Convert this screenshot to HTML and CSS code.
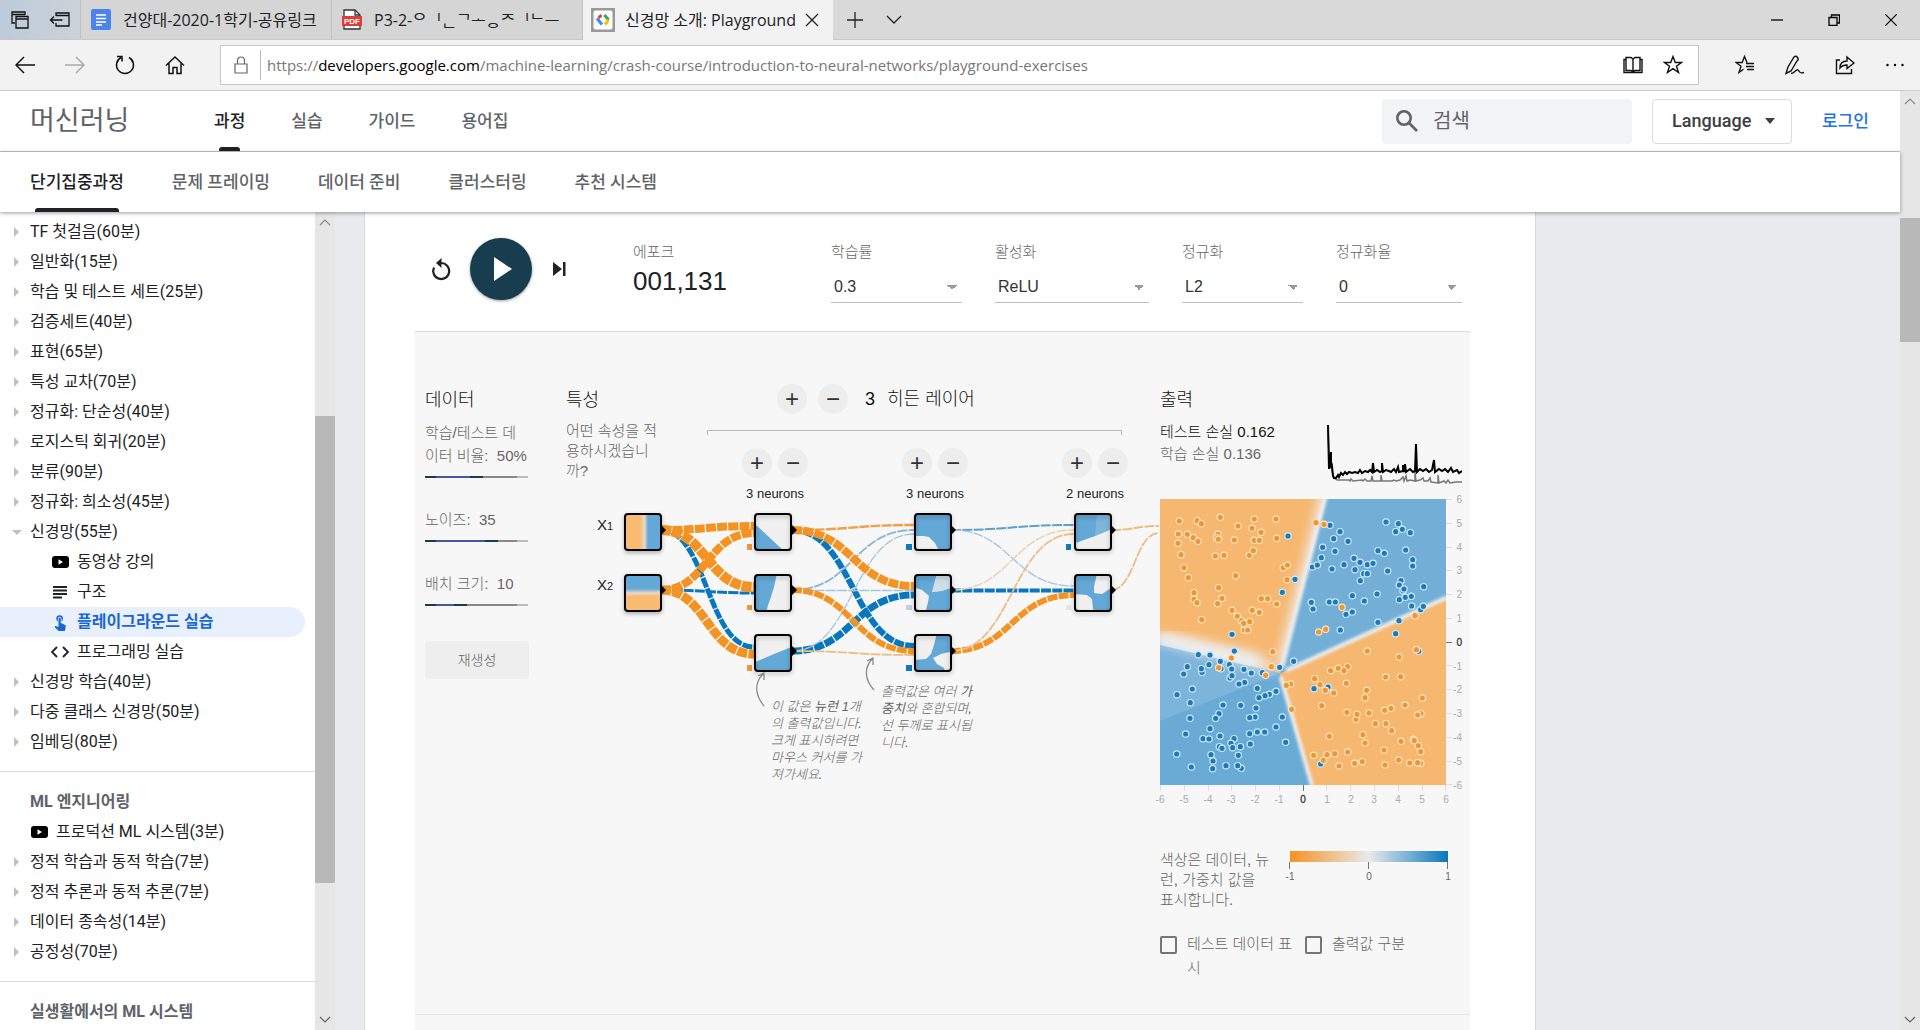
FILE: index.html
```html
<!DOCTYPE html>
<html lang="ko">
<head>
<meta charset="utf-8">
<title>신경망 소개: Playground 실습</title>
<link rel="stylesheet" href="styles.css">
</head>
<body>
<div class="tabbar">
  <div class="tab-tools">
    <button class="icon-btn" aria-label="탭 모음"><svg width="20" height="20" viewBox="0 0 20 20" fill="none" stroke="#111" stroke-width="1.3"><path d="M15 5V2H2v11h3M2 4.500h13"/><path d="M6 6.500h12v11.500H6zM6 9h12" /></svg></button>
    <button class="icon-btn" aria-label="탭 보관"><svg width="22" height="18" viewBox="0 0 22 18" fill="none" stroke="#111" stroke-width="1.300"><path d="M7 5V2h13v13H7v-3M7 4.500h13M1.500 9h12M5 5.500L1.500 9 5 12.500"/></svg></button>
  </div>
  <div class="tab">
    <svg width="20" height="21" viewBox="0 0 20 21"><rect width="20" height="21" rx="2" fill="#4c84ee"/><path d="M5 6h10M5 9.500h10M5 13h10M5 16h6" stroke="#fff" stroke-width="1.600"/></svg>
    <span class="tab-title">건양대-2020-1학기-공유링크</span>
  </div>
  <div class="tab">
    <svg width="20" height="21" viewBox="0 0 20 21"><path d="M2 1h11l5 5v14H2z" fill="#fff" stroke="#333" stroke-width="1.300"/><path d="M13 1v5h5" fill="none" stroke="#333" stroke-width="1.300"/><rect y="7" width="20" height="10" fill="#e13b38"/><text x="10" y="15" text-anchor="middle" class="pdf-label">PDF</text></svg>
    <span class="tab-title">P3-2-ᄋ&#8204;ᅵ&#8204;ᆫ&#8204;ᄀ&#8204;ᅩ&#8204;ᆼ&#8204;ᄌ&#8204;ᅵ&#8204;ᄂ&#8204;ᅳ</span>
  </div>
  <div class="tab tab-active">
    <svg width="24" height="24" viewBox="0 0 24 24"><rect width="24" height="24" fill="#999"/><rect x="2.500" y="2.500" width="19" height="19" rx="2" fill="#fff"/><g fill="none" stroke-width="3"><path d="M10.500 7L7.500 10" stroke="#ea4335"/><path d="M6 10.500l5 6" stroke="#4285f4"/><path d="M13.500 7l4 5" stroke="#34a853"/><path d="M17.500 12L14 16.500" stroke="#fbbc05"/></g></svg>
    <span class="tab-title">신경망 소개: Playground</span>
    <button class="icon-btn" aria-label="탭 닫기"><svg width="14" height="14" viewBox="0 0 14 14" stroke="#222" stroke-width="1.300"><path d="M1 1l12 12M13 1L1 13"/></svg></button>
  </div>
  <div class="tab-extra">
    <button class="icon-btn" aria-label="새 탭"><svg width="18" height="18" viewBox="0 0 18 18" stroke="#222" stroke-width="1.300"><path d="M9 1v16M1 9h16"/></svg></button>
    <button class="icon-btn" aria-label="탭 목록"><svg width="16" height="10" viewBox="0 0 16 10" fill="none" stroke="#222" stroke-width="1.300"><path d="M1 1l7 7 7-7"/></svg></button>
  </div>
  <div class="window-controls">
    <button class="icon-btn" aria-label="최소화"><svg width="12" height="12" viewBox="0 0 12 12" stroke="#000" stroke-width="1.300"><path d="M0 6h12"/></svg></button>
    <button class="icon-btn" aria-label="이전 크기로"><svg width="12" height="12" viewBox="0 0 12 12" fill="none" stroke="#000" stroke-width="1.300"><path d="M1 3.500h8v8H1zM3.500 3.500V1h8v8H9"/></svg></button>
    <button class="icon-btn" aria-label="닫기"><svg width="12" height="12" viewBox="0 0 12 12" stroke="#000" stroke-width="1.200"><path d="M0 0l12 12M12 0L0 12"/></svg></button>
  </div>
</div>

<div class="toolbar">
  <div class="nav-buttons">
    <button class="icon-btn" aria-label="뒤로"><svg width="20" height="18" viewBox="0 0 20 18" fill="none" stroke="#111" stroke-width="1.500"><path d="M20 9H1M9 1L1 9l8 8"/></svg></button>
    <button class="icon-btn" aria-label="앞으로"><svg width="20" height="18" viewBox="0 0 20 18" fill="none" stroke="#aaa" stroke-width="1.500"><path d="M0 9h19M11 1l8 8-8 8"/></svg></button>
    <button class="icon-btn" aria-label="새로 고침"><svg width="20" height="20" viewBox="0 0 20 20" fill="none" stroke="#111" stroke-width="1.500"><path d="M14 2.500A8.500 8.500 0 1 1 6 2.500M2 1.500h5v5"/></svg></button>
    <button class="icon-btn" aria-label="홈"><svg width="20" height="20" viewBox="0 0 20 20" fill="none" stroke="#111" stroke-width="1.500"><path d="M1 10.500L10 2l9 8.500M4 8.500V18.500h4v-6h4v6h4V8.500"/></svg></button>
  </div>
  <div class="address">
    <svg class="lock" width="14" height="18" viewBox="0 0 14 18" fill="none" stroke="#666" stroke-width="1.200"><path d="M1 8h12v9H1zM3.500 8V4.500a3.500 3.500 0 0 1 7 0V8"/></svg>
    <span class="url">https://<b>developers.google.com</b>/machine-learning/crash-course/introduction-to-neural-networks/playground-exercises</span>
    <button class="icon-btn" aria-label="읽기용 보기"><svg width="20" height="18" viewBox="0 0 20 18" fill="none" stroke="#111" stroke-width="1.400"><path d="M10 3v13M3 1.500h5l2 1.500 2-1.500h5v13h-5L10 16l-2-1.500H3zM3 3.500H1v13h18v-13h-2"/></svg></button>
    <button class="icon-btn" aria-label="즐겨찾기 추가"><svg width="20" height="20" viewBox="0 0 20 20" fill="none" stroke="#111" stroke-width="1.400"><path d="M10 1.500l2.300 6h6.200l-5 3.800 2 6.200-5.500-3.800-5.500 3.800 2-6.200-5-3.800h6.200z"/></svg></button>
  </div>
  <div class="tool-buttons">
    <button class="icon-btn" aria-label="허브"><svg width="20" height="20" viewBox="0 0 20 20" fill="none" stroke="#111" stroke-width="1.400"><path d="M12 7.500L9.500 1.500l-2.300 6H1l5 3.800-2 6.200 4.500-3.200M11 8.500h8M11 11.500h8M12 14.500h7"/></svg></button>
    <button class="icon-btn" aria-label="메모 추가"><svg width="20" height="20" viewBox="0 0 20 20" fill="none" stroke="#111" stroke-width="1.400"><path d="M1 18.500l2-6.500L9 2q2-1.500 3.500.5T12 6l-6 10zM6 18.500c4 0 5-5 7-3.500s1 4 6 2.500"/></svg></button>
    <button class="icon-btn" aria-label="공유"><svg width="20" height="20" viewBox="0 0 20 20" fill="none" stroke="#111" stroke-width="1.400"><path d="M5 5H1.500v13.500h15V14M5 13c0-5 3-7 7-7V2l7 6-7 5.500V10c-3 0-5 .5-7 3z"/></svg></button>
    <button class="icon-btn" aria-label="설정 등"><svg width="20" height="4" viewBox="0 0 20 4"><circle cx="2.500" cy="2" r="1.200"/><circle cx="10" cy="2" r="1.200"/><circle cx="17.500" cy="2" r="1.200"/></svg></button>
  </div>
</div>

<div class="viewport">
  <div class="site">
    <header class="site-header">
      <a class="product" href="#">머신러닝</a>
      <nav class="tabs-nav top-tabs">
        <a class="current" href="#">과정</a><a href="#">실습</a><a href="#">가이드</a><a href="#">용어집</a>
      </nav>
      <label class="search">
        <svg width="24" height="24" viewBox="0 0 24 24" fill="none" stroke="#5f6368" stroke-width="2.600"><circle cx="9" cy="9" r="6.700"/><path d="M14 14l8 8"/></svg>
        <input type="search" placeholder="검색" aria-label="검색">
      </label>
      <button class="language">Language <svg width="10" height="6" viewBox="0 0 10 6"><path d="M0 0h10L5 6z" fill="#3c4043"/></svg></button>
      <a class="login" href="#">로그인</a>
    </header>
    <nav class="tabs-nav sub-tabs">
      <a class="current" href="#">단기집중과정</a><a href="#">문제 프레이밍</a><a href="#">데이터 준비</a><a href="#">클러스터링</a><a href="#">추천 시스템</a>
    </nav>

    <div class="content">
      <nav class="sidebar">
        <ul>
          <li><a class="fold" href="#">TF 첫걸음(60분)</a></li>
          <li><a class="fold" href="#">일반화(15분)</a></li>
          <li><a class="fold" href="#">학습 및 테스트 세트(25분)</a></li>
          <li><a class="fold" href="#">검증세트(40분)</a></li>
          <li><a class="fold" href="#">표현(65분)</a></li>
          <li><a class="fold" href="#">특성 교차(70분)</a></li>
          <li><a class="fold" href="#">정규화: 단순성(40분)</a></li>
          <li><a class="fold" href="#">로지스틱 회귀(20분)</a></li>
          <li><a class="fold" href="#">분류(90분)</a></li>
          <li><a class="fold" href="#">정규화: 희소성(45분)</a></li>
          <li><a class="fold open" href="#">신경망(55분)</a>
            <ul class="nested">
              <li><a href="#"><svg width="18" height="18" viewBox="0 0 18 18"><rect x="1" y="3" width="17" height="12" rx="3" fill="#000"/><path d="M7.500 6.300v5.400L12 9z" fill="#fff"/></svg>동영상 강의</a></li>
              <li><a href="#"><svg width="18" height="18" viewBox="0 0 18 18" stroke="#202124" stroke-width="2"><path d="M2 4h14M2 7.500h14M2 11h14M2 14.500h9"/></svg>구조</a></li>
              <li><a class="active" href="#"><svg width="18" height="18" viewBox="0 0 24 24" fill="#1967d2"><path d="M9 11.240V7.500a2.500 2.500 0 0 1 5 0v3.740c1.210-.81 2-2.180 2-3.740a4.500 4.500 0 0 0-9 0c0 1.560.79 2.930 2 3.740zm9.840 4.630l-4.540-2.260c-.17-.07-.35-.11-.54-.11H13v-6a1.500 1.500 0 0 0-3 0v10.740l-3.430-.72c-.08-.01-.15-.03-.24-.03-.31 0-.59.13-.79.33l-.79.8 4.940 4.940c.27.27.65.440 1.060.440h6.790c.75 0 1.330-.55 1.440-1.280l.75-5.270c.01-.07.020-.14.020-.2 0-.62-.38-1.160-.91-1.380z"/></svg>플레이그라운드 실습</a></li>
              <li><a href="#"><svg width="18" height="18" viewBox="0 0 18 18" fill="none" stroke="#202124" stroke-width="1.800"><path d="M6 4L1 9l5 5M12 4l5 5-5 5"/></svg>프로그래밍 실습</a></li>
            </ul>
          </li>
          <li><a class="fold" href="#">신경망 학습(40분)</a></li>
          <li><a class="fold" href="#">다중 클래스 신경망(50분)</a></li>
          <li><a class="fold" href="#">임베딩(80분)</a></li>
        </ul>
        <hr>
        <h2>ML 엔지니어링</h2>
        <ul>
          <li><a class="video" href="#"><svg width="18" height="18" viewBox="0 0 18 18"><rect x="1" y="3" width="17" height="12" rx="3" fill="#000"/><path d="M7.500 6.300v5.400L12 9z" fill="#fff"/></svg>프로덕션 ML 시스템(3분)</a></li>
          <li><a class="fold" href="#">정적 학습과 동적 학습(7분)</a></li>
          <li><a class="fold" href="#">정적 추론과 동적 추론(7분)</a></li>
          <li><a class="fold" href="#">데이터 종속성(14분)</a></li>
          <li><a class="fold" href="#">공정성(70분)</a></li>
        </ul>
        <hr>
        <h2>실생활에서의 ML 시스템</h2>
      </nav>
      <div class="scrollbar side-scroll">
        <svg width="20" height="20" viewBox="0 0 20 20" fill="none" stroke="#888" stroke-width="1.200"><path d="M5 13l5-5 5 5"/></svg>
        <div class="thumb"></div>
        <svg class="down" width="20" height="20" viewBox="0 0 20 20" fill="none" stroke="#666" stroke-width="1.200"><path d="M5 7l5 5 5-5"/></svg>
      </div>

      <main>
        <article>
          <section class="controls">
            <div class="transport">
              <button aria-label="재설정"><svg width="20" height="24" viewBox="0 0 20 24" fill="none" stroke="#222" stroke-width="2.200"><path d="M3 10.500A8 8 0 1 0 10 6H6"/><path d="M10.500 1L5 6l5.500 5z" fill="#222" stroke="none"/></svg></button>
              <button class="play" aria-label="실행"><svg width="20" height="26" viewBox="0 0 20 26"><path d="M1 1l18 12L1 25z" fill="#fff"/></svg></button>
              <button aria-label="한 단계"><svg width="20" height="16" viewBox="0 0 20 16"><path d="M2 1l9 7-9 7zM12 1h2.500v14H12z" fill="#222"/></svg></button>
            </div>
            <div class="epoch"><span class="caption">에포크</span><output>001,131</output></div>
            <label class="field f-rate"><span class="caption">학습률</span><select><option>0.3</option></select></label>
            <label class="field f-act"><span class="caption">활성화</span><select><option>ReLU</option></select></label>
            <label class="field f-reg"><span class="caption">정규화</span><select><option>L2</option></select></label>
            <label class="field f-regrate"><span class="caption">정규화율</span><select><option>0</option></select></label>
          </section>

          <section class="panel">
            <div class="data">
              <h3>데이터</h3>
              <label>학습/테스트 데<br>이터 비율: &nbsp;50%<input type="range" style="--from:44%;--to:56%"></label>
              <label>노이즈: &nbsp;35<input type="range" style="--from:58%;--to:71%"></label>
              <label>배치 크기: &nbsp;10<input type="range" style="--from:28%;--to:41%"></label>
              <button class="regen">재생성</button>
            </div>

            <div class="network">
              <div class="features"><h3>특성</h3><p>어떤 속성을 적용하시겠습니까?</p></div>
              <div class="layers">
                <div class="layers-head">
                  <button class="round" aria-label="레이어 추가">+</button><button class="round" aria-label="레이어 삭제">−</button>
                  <span class="count">3</span><span>히든 레이어</span>
                </div>
                <div class="bracket"></div>
                <div class="layer-controls">
                  <div><button class="round" aria-label="뉴런 추가">+</button><button class="round" aria-label="뉴런 삭제">−</button><span>3 neurons</span></div>
                  <div><button class="round" aria-label="뉴런 추가">+</button><button class="round" aria-label="뉴런 삭제">−</button><span>3 neurons</span></div>
                  <div><button class="round" aria-label="뉴런 추가">+</button><button class="round" aria-label="뉴런 삭제">−</button><span>2 neurons</span></div>
                </div>
              </div>
              <div class="canvas">
                <svg class="graph" width="594" height="280" viewBox="566 505 594 280">
                  <defs>
                    <linearGradient id="gx"><stop offset=".42" stop-color="#f9ba72"/><stop offset=".54" stop-color="#ecd9c4"/><stop offset=".64" stop-color="#63a8d6"/></linearGradient>
                    <linearGradient id="gy" x2="0" y2="1"><stop offset=".38" stop-color="#63a8d6"/><stop offset=".5" stop-color="#ecd9c4"/><stop offset=".6" stop-color="#f9ba72"/></linearGradient>
                    <filter id="soft" x="-20%" y="-20%" width="140%" height="140%"><feGaussianBlur stdDeviation=".7"/></filter>
                    <filter id="drop" x="-20%" y="-20%" width="150%" height="150%"><feDropShadow dx="0" dy="2" stdDeviation="2" flood-opacity=".3"/></filter>
                    <clipPath id="cell"><rect x="1" y="1" width="35" height="35"/></clipPath>
                  </defs>
                  <g class="links" fill="none" stroke-dasharray="10 1.250">
                    <g stroke="#0877bd">
                      <path d="M661 530C707 530 707 647 754 647" stroke-width="5"/>
                      <path d="M661 590C707 590 707 593 754 593" stroke-width="3"/>
                      <path d="M792 530C853 530 853 646 914 646" stroke-width="6"/>
                      <path d="M792 651C853 651 853 595 914 595" stroke-width="7"/>
                      <path d="M951 590.500H1074" stroke-width="4"/>
                      <path d="M951 530C1012 530 1012 525 1074 525" stroke-width="2" stroke="#5f9fcb"/>
                    </g>
                    <g stroke="#a3c6de" stroke-width="1.300">
                      <path d="M792 590C853 590 853 530 914 530" stroke="#8ab6d8" stroke-width="1.800"/>
                      <path d="M792 590.500H914"/>
                      <path d="M792 651C853 651 853 534 914 534"/>
                      <path d="M951 530C1012 530 1012 586 1074 586"/>
                    </g>
                    <g stroke="#f59322">
                      <path d="M661 530C707 530 707 526 754 526" stroke-width="8"/>
                      <path d="M661 530C707 530 707 587 754 587" stroke-width="10"/>
                      <path d="M661 590C707 590 707 533 754 533" stroke-width="8"/>
                      <path d="M661 590C707 590 707 654 754 654" stroke-width="9"/>
                      <path d="M792 530C853 530 853 525 914 525" stroke-width="2.400" stroke="#f0a04a"/>
                      <path d="M792 530C853 530 853 586 914 586" stroke-width="8"/>
                      <path d="M792 590C853 590 853 651 914 651" stroke-width="6"/>
                      <path d="M951 651C1012 651 1012 595 1074 595" stroke-width="6"/>
                    </g>
                    <g stroke="#edbd88" stroke-width="1.800">
                      <path d="M792 651C853 651 853 655 914 655"/>
                      <path d="M951 590C1012 590 1012 530 1074 530" stroke="#ecd0b2" stroke-width="1.500"/>
                      <path d="M951 651C1012 651 1012 534 1074 534"/>
                      <path d="M1111 530C1135 530 1135 526 1159 526" stroke-width="2"/>
                      <path d="M1111 590C1135 590 1135 533 1159 533"/>
                    </g>
                  </g>
                  <g fill="#eb9838"><path d="M747 544h5v6h-5zM747 605h5v5h-5zM747 665h5v6h-5z"/></g>
                  <path d="M906 544h6v6h-6zM906 665h6v6h-6zM1066 544h5v6h-5z" fill="#1477bb"/>
                  <path d="M906 605h6v5h-6z" fill="#bcd2e3"/><path d="M1066 605h5v5h-5z" fill="#e2e4e7"/>
                  <path d="M661 525l5 5-5 5zM661 585l5 5-5 5zM792 525l5 5-5 5zM792 585l5 5-5 5zM792 646l5 5-5 5zM951 525l5 5-5 5zM951 585l5 5-5 5zM951 646l5 5-5 5zM1111 525l5 5-5 5zM1111 585l5 5-5 5z"/>
                  <g class="nodes" transform="translate(1 1)">
                    <g transform="translate(624 513)"><rect class="frame" width="36" height="36" rx="3" fill="url(#gx)"/></g>
                    <g transform="translate(624 574)"><rect class="frame" width="36" height="36" rx="3" fill="url(#gy)"/></g>
                    <g transform="translate(754 513)"><rect class="bg" width="36" height="36"/><g clip-path="url(#cell)"><path d="M0 10L30 38H0z" filter="url(#soft)"/></g><rect class="frame" width="36" height="36" rx="3"/></g>
                    <g transform="translate(754 574)"><rect class="bg" width="36" height="36"/><g clip-path="url(#cell)"><path d="M-2-2h24l-3 14-3 10-3 8-2 9H-2z" filter="url(#soft)"/></g><rect class="frame" width="36" height="36" rx="3"/></g>
                    <g transform="translate(754 634)"><rect class="bg" width="36" height="36"/><g clip-path="url(#cell)"><path d="M-2 28L12 22 24 17 39 11V39H-2z" filter="url(#soft)"/></g><rect class="frame" width="36" height="36" rx="3"/></g>
                    <g transform="translate(914 513)"><rect class="bg" width="36" height="36"/><g clip-path="url(#cell)"><path d="M-2-2H39V39H25L20 29 14 23 9 22-2 22z" filter="url(#soft)"/></g><rect class="frame" width="36" height="36" rx="3"/></g>
                    <g transform="translate(914 574)"><rect class="bg" width="36" height="36"/><g clip-path="url(#cell)"><path d="M-2-2H22L19 12 17 17 26 16 39 12V39H10L13 27 14 21 7 15-2 12z" filter="url(#soft)"/><path d="M22-2H39V12L26 16 17 17z" class="pale"/></g><rect class="frame" width="36" height="36" rx="3"/></g>
                    <g transform="translate(914 634)"><rect class="bg" width="36" height="36"/><g clip-path="url(#cell)"><path d="M22-2H39V16L26 19 18 23 22 29 29 33 31 39H-2V25L11 24 16 19 19 10z" filter="url(#soft)"/></g><rect class="frame" width="36" height="36" rx="3"/></g>
                    <g transform="translate(1074 513)"><rect class="bg" width="36" height="36"/><g clip-path="url(#cell)"><path d="M-2-2H39V14L20 22-2 30z" filter="url(#soft)"/><path d="M22-2H39V14L20 22z" class="paler"/></g><rect class="frame" width="36" height="36" rx="3"/></g>
                    <g transform="translate(1074 574)"><rect class="bg" width="36" height="36"/><g clip-path="url(#cell)"><path d="M-2-2H22L19 12V18L27 19 39 11V39H22L18 34 17 24 12 20-2 19z" filter="url(#soft)"/></g><rect class="frame" width="36" height="36" rx="3"/></g>
                  </g>
                  <g class="inputs"><text x="597" y="530">X<tspan class="sub">1</tspan></text><text x="597" y="590">X<tspan class="sub">2</tspan></text></g>
                  <g fill="none" stroke="#888" stroke-width="1.300"><path d="M764 706C755 695 754 683 763 674M758 676l6-3v7M874 690C864 679 864 667 873 658M867 661l6-3v7"/></g>
                </svg>
                <p class="callout neuron-note">이 값은 <b>뉴런</b> 1개<br>의 출력값입니다.<br>크게 표시하려면<br>마우스 커서를 가<br>져가세요.</p>
                <p class="callout weight-note">출력값은 여러 <b>가<br>중치</b>와 혼합되며,<br>선 두께로 표시됩<br>니다.</p>
              </div>
            </div>

            <div class="output">
              <h3>출력</h3>
              <div class="loss">
                <p><span class="test-loss">테스트 손실 0.162</span><br>학습 손실 0.136</p>
                <svg width="135" height="60" viewBox="0 0 135 60" fill="none">
                  <path stroke="#777" stroke-width="1.500" d="M1 5L2 30 4 35 5 47 7 54 10 56H22l1 1 1-2 2 2 9-1 1 1 2-2 2 2h4l1-5 1 5h8v-6l1 6h10l2-1 2 1 4-1 3-3 1 4 2-5 1 5 3-1 5 1v-9l1 9 4-1 3-2 1 3 4 0 2-3 1 4 7 1v-8l1 8 5-2 2 2 2-3 2 3 6-1h10"/>
                  <path stroke="#000" stroke-width="2" d="M1 1L2 45 4 28 4 44 5 42 6 52 7 54 9 54 11 51 12 53 14 49 16 51 18 48 20 50 22 48 25 49 28 48 31 49 33 46 35 49 38 47 41 48 43 46 45 48 46 39 47 48 50 46 53 48 55 47V39L56 48 59 46 62 47 64 48 67 45 69 48 71 43 72 48 76 47V41L77 48 78 40 79 48 83 45 86 48 88 47 89 20 90 48 93 45 96 47 99 45 102 48 105 46 107 36 108 48 112 45 115 47 118 45 121 48 124 44 126 48 130 46 132 49 135 47"/>
                </svg>
              </div>
              <svg class="plot" width="286" height="311" viewBox="0 0 286 311">
                <svg width="286" height="286" viewBox="30 297 858 858">
                  <defs>
                    <marker id="orange" markerUnits="userSpaceOnUse" markerWidth="30" markerHeight="30" refX="15" refY="15"><circle cx="15" cy="15" r="9.500" fill="#ee9633" stroke="#fce4c4" stroke-width="3.500"/></marker>
                    <marker id="blue" markerUnits="userSpaceOnUse" markerWidth="30" markerHeight="30" refX="15" refY="15"><circle cx="15" cy="15" r="9.500" fill="#1b7abb" stroke="#d4e9f7" stroke-width="3.500"/></marker>
                    <filter id="edge" x="-20%" y="-20%" width="140%" height="140%"><feGaussianBlur stdDeviation="4"/></filter>
                    <filter id="glow" x="-40%" y="-40%" width="180%" height="180%"><feGaussianBlur stdDeviation="17"/></filter>
                    <clipPath id="tl"><path d="M30 297H527L390 820 30 735z"/></clipPath>
                  </defs>
                  <rect x="30" y="297" width="858" height="858" fill="#6aabd5"/>
                  <path d="M30 735L390 820 30 962z" fill="#7db4da"/>
                  <path d="M527 297H888V590L388 822z" fill="#72aed6"/>
                  <path d="M30 297H527L390 820 30 720z" fill="#f6b770"/>
                  <path d="M388 822L888 592V1155H485z" fill="#f6b770"/>
                  <g clip-path="url(#tl)"><path d="M535 285L405 800" stroke="#eeeef0" stroke-width="46" filter="url(#glow)"/><path d="M20 722L330 792" stroke="#eeeef0" stroke-width="56" filter="url(#glow)"/></g>
                  <path d="M20 712L375 806" fill="none" stroke="#ebeef2" stroke-width="24" filter="url(#glow)"/>
                  <path d="M527 290L397 800M408 812L890 592M392 830L486 1157" fill="none" stroke="#eceef0" stroke-width="12" filter="url(#edge)"/>
                  <polyline class="dots-blue" points="414,408 540,376 570,395 551,416 594,424 708,366 745,371 757,388 737,395 781,398 518,442 555,454 514,473 487,501 502,495 546,507 582,494 612,475 630,487 652,494 669,490 615,509 641,521 652,521 631,542 684,452 703,460 713,513 767,450 788,479 788,498 435,538 397,577 753,542 748,555 759,572 762,567 821,560 748,599 766,592 784,589 785,618 812,629 820,619 607,587 681,582 643,603 484,607 489,627 538,606 556,606 588,643 607,636 747,662 684,667 571,690 737,701 246,703"/>
                  <polyline class="dots-orange" points="88,363 141,362 154,371 211,352 313,357 378,357 264,378 306,385 333,397 85,402 112,403 130,413 144,424 84,430 204,403 200,413 205,418 253,420 313,421 328,421 380,415 498,368 522,373 93,464 196,468 222,466 298,466 310,452 102,503 115,533 257,527 400,503 412,495 411,539 206,563 132,598 132,578 141,608 216,595 203,611 334,596 353,596 380,612 246,631 262,649 307,631 328,637 155,659 275,662 281,670 299,665 283,690 293,690 576,622 506,696 527,688 795,647"/>
                  <g transform="translate(0 660)">
                    <polyline class="dots-blue" points="145,104 180,105 253,93 211,124 112,140 156,157 154,146 177,134 101,162 213,146 238,134 245,147 282,148 240,174 246,167 304,159 337,158 389,142 431,124 284,187 267,192 127,207 81,224 322,205 378,214 358,223 345,227 327,233 121,248 219,255 272,256 318,264 207,281 197,295 120,295 315,291 299,293 397,291 378,321 180,326 107,342 299,341 322,336 344,336 159,356 177,357 210,348 252,356 243,370 208,380 216,385 248,383 271,380 301,372 407,367 80,402 183,404 189,423 265,406 188,446 228,437 274,445 263,437 124,441 492,206 534,201 512,432 806,94"/>
                    <polyline class="dots-orange" points="244,114 206,143 368,95 364,140 347,166 422,192 409,196 425,268 652,93 747,111 799,89 542,152 565,145 593,140 582,152 494,176 510,194 526,211 551,219 589,190 707,171 752,170 650,211 645,233 817,234 515,257 765,255 591,277 618,298 621,283 657,279 704,271 723,265 813,281 803,285 676,311 708,311 725,332 538,349 639,344 645,369 753,364 790,358 793,362 805,377 702,390 812,395 491,406 531,404 520,421 554,401 593,396 567,438 614,430 637,425 705,435 746,420 779,429 812,430 803,428"/>
                  </g>
                </svg>
                <path stroke="#ddd" fill="none" d="M286 .5h6M286 24.500h6M286 48.500h6M286 71.500h6M286 95.500h6M286 119.500h6M286 166.500h6M286 190.500h6M286 214.500h6M286 238.500h6M286 262.500h6M286 285.500h6M.5 286v6M24.500 286v6M48.500 286v6M71.500 286v6M95.500 286v6M119.500 286v6M166.500 286v6M190.500 286v6M214.500 286v6M238.500 286v6M262.500 286v6M285.500 286v6"/>
                <path stroke="#777" d="M286 143.500h6M143.500 286v6"/>
                <g class="axis-y"><text x="302" y="4">6</text><text x="302" y="28">5</text><text x="302" y="52">4</text><text x="302" y="75">3</text><text x="302" y="99">2</text><text x="302" y="123">1</text><text class="zero" x="302" y="147">0</text><text x="302" y="171">-1</text><text x="302" y="194">-2</text><text x="302" y="218">-3</text><text x="302" y="242">-4</text><text x="302" y="266">-5</text><text x="302" y="290">-6</text></g>
                <g class="axis-x"><text x="0" y="304">-6</text><text x="24" y="304">-5</text><text x="48" y="304">-4</text><text x="71" y="304">-3</text><text x="95" y="304">-2</text><text x="119" y="304">-1</text><text class="zero" x="143" y="304">0</text><text x="167" y="304">1</text><text x="191" y="304">2</text><text x="214" y="304">3</text><text x="238" y="304">4</text><text x="262" y="304">5</text><text x="286" y="304">6</text></g>
              </svg>
              <div class="legend">
                <p>색상은 데이터, 뉴<br>런, 가중치 값을<br>표시합니다.</p>
                <svg width="158" height="32" viewBox="0 0 158 32">
                  <defs><linearGradient id="scale"><stop offset="0" stop-color="#f59322"/><stop offset=".5" stop-color="#e8eaeb"/><stop offset="1" stop-color="#0877bd"/></linearGradient></defs>
                  <rect width="158" height="11" fill="url(#scale)"/><path d="M-.5 11v7M78.500 11v7M157.500 11v7" stroke="#777"/>
                  <text x="0" y="29">-1</text><text x="79" y="29">0</text><text x="158" y="29">1</text>
                </svg>
              </div>
              <div class="checks">
                <label><input type="checkbox"><span>테스트 데이터 표시</span></label>
                <label><input type="checkbox"><span>출력값 구분</span></label>
              </div>
            </div>
          </section>
        </article>
      </main>
    </div>
  </div>
  <div class="scrollbar page-scroll">
    <svg width="20" height="20" viewBox="0 0 20 20" fill="none" stroke="#888" stroke-width="1.200"><path d="M5 13l5-5 5 5"/></svg>
    <div class="thumb"></div>
    <svg class="down" width="20" height="20" viewBox="0 0 20 20" fill="none" stroke="#666" stroke-width="1.200"><path d="M5 7l5 5 5-5"/></svg>
  </div>
</div>
</body>
</html>
```
FILE: styles.css
```css
* { box-sizing: border-box; }
body {
  margin: 0;
  height: 100vh;
  display: flex;
  flex-direction: column;
  overflow: hidden;
  background: #fff;
  color: #202124;
  font: 16px/20px Roboto, "Noto Sans CJK KR", sans-serif;
}
a { color: inherit; text-decoration: none; }
button { border: 0; padding: 0; background: none; font: inherit; color: inherit; }
ul { list-style: none; margin: 0; padding: 0; }
h2, h3, p { margin: 0; }
svg { display: block; flex: none; }
.icon-btn { display: flex; align-items: center; justify-content: center; flex: none; }

/* Browser chrome */
.tabbar, .toolbar { font-family: "Open Sans", "Noto Sans CJK KR", sans-serif; }
.tabbar { flex: none; display: flex; height: 40px; background: #d9d9d9; border-bottom: 1px solid #c8c8c8; }
.tab-tools { display: flex; align-items: center; gap: 19px; width: 80px; padding-left: 10px; background: linear-gradient(90deg, #bccbda, #ccd2d8); }
.tab { display: flex; align-items: center; gap: 12px; width: 251px; padding: 0 11px 0 10px; border-left: 1px solid #bfbfbf; background: #d5d5d5; }
.tab-title { flex: 1; min-width: 0; overflow: hidden; white-space: nowrap; }
.tab-active { height: 40px; padding: 0 14px 0 8px; gap: 10px; background: #f2f2f2; }
.pdf-label { font: bold 8px "Liberation Sans", sans-serif; fill: #fff; }
.tab-extra { display: flex; align-items: center; gap: 22px; padding-left: 13px; }
.window-controls { display: flex; align-items: center; gap: 45px; margin-left: auto; padding-right: 23px; }
.toolbar { flex: none; display: flex; align-items: center; height: 51px; padding-bottom: 1px; background: #f2f2f2; border-bottom: 1px solid #ccc; }
.nav-buttons { display: flex; gap: 30px; width: 220px; padding-left: 15px; }
.address { flex: 1; min-width: 0; display: flex; align-items: center; height: 40px; padding: 0 15px 0 13px; background: #fff; border: 1px solid #c8c8c8; }
.lock { margin-right: 12px; }
.url { flex: 1; min-width: 0; overflow: hidden; white-space: nowrap; padding-left: 6px; border-left: 1px solid #bbb; line-height: 30px; font-size: 15px; color: #777; }
.url b { font-weight: 400; color: #000; }
.address .icon-btn + .icon-btn { margin-left: 20px; }
.tool-buttons { display: flex; gap: 30px; padding: 0 15px 0 36px; }

/* Site */
.viewport { flex: 1; min-height: 0; display: flex; }
.site { flex: 1; min-width: 0; display: flex; flex-direction: column; }
.site-header { flex: none; display: flex; align-items: center; height: 61px; padding: 0 31px 0 30px; border-bottom: 1px solid #c4c6c9; }
.product { width: 184px; font-size: 27px; line-height: 36px; color: #5f6368; }
.tabs-nav { display: flex; gap: 46px; height: 60px; font-size: 17px; font-weight: 500; line-height: 60px; color: #5f6368; }
.tabs-nav .current { position: relative; color: #202124; }
.tabs-nav .current::after { content: ""; position: absolute; left: 5px; right: 5px; bottom: 0; height: 4px; border-radius: 3px 3px 0 0; background: #202124; }
.sub-tabs { flex: none; gap: 48px; padding-left: 30px; position: relative; z-index: 1; background: #fff; box-shadow: 0 1px 4px rgba(0, 0, 0, .4); }
.search { display: flex; align-items: center; gap: 14px; width: 250px; height: 45px; margin: 0 20px 0 auto; padding: 0 13px; border-radius: 4px; background: #f1f3f4; }
.search input { flex: 1; min-width: 0; border: 0; padding: 0; background: none; font: 20px/28px Roboto, "Noto Sans CJK KR", sans-serif; }
.search input::placeholder { color: #5f6368; opacity: 1; }
.language { display: flex; align-items: center; justify-content: space-between; width: 140px; height: 45px; margin-right: 30px; padding: 0 16px 0 19px; border: 1px solid #dadce0; border-radius: 4px; font-size: 18px; font-weight: 500; color: #3c4043; }
.login { font-size: 17px; font-weight: 500; color: #1a73e8; }
.content { flex: 1; min-height: 0; display: flex; }

.sidebar { width: 315px; flex: none; padding-top: 5px; overflow: hidden; }
.sidebar a, .sidebar h2 { display: flex; align-items: center; height: 30px; padding-left: 30px; font-size: 16px; font-weight: 400; }
.sidebar h2 { font-weight: 700; color: #5f6368; }
.sidebar hr { height: 1px; margin: 14px 0 15px; border: 0; background: #dadce0; }
.sidebar .fold { padding-left: 14px; }
.fold::before { content: ""; width: 0; margin-right: 11px; border: solid transparent; border-width: 5px 0 5px 5px; border-left-color: #bdc1c6; }
.sidebar .open { padding-left: 12px; }
.open::before { margin-right: 8px; border-width: 5px 5px 0; border-color: #bdc1c6 transparent; }
.sidebar .video { gap: 8px; }
.sidebar .nested a { gap: 8px; padding-left: 51px; }
.sidebar .nested .active { width: 305px; border-radius: 0 15px 15px 0; background: #e8f0fe; color: #1967d2; font-weight: 700; }

.scrollbar { flex: none; width: 20px; display: flex; flex-direction: column; background: #e6e6e6; }
.scrollbar .down { margin-top: auto; }
.thumb { background: #b8b8b8; }
.side-scroll .thumb { margin-top: 184px; height: 467px; }
.page-scroll .thumb { margin-top: 107px; height: 124px; }

main { flex: 1; min-width: 0; padding-left: 29px; background: #e8eaed; }
article { max-width: 1172px; min-height: 100%; padding: 0 65px 0 50px; background: #fff; border: solid #d5d7da; border-width: 0 1px; }
.controls, .panel { width: 1055px; font-family: "Liberation Sans", "Noto Sans CJK KR", sans-serif; font-weight: 300; }

/* Playground controls */
.controls { display: flex; gap: 33px; height: 119px; padding-top: 30px; }
.caption { display: block; font-size: 15px; line-height: 20px; color: #666; }
.transport { display: flex; align-items: center; gap: 19px; width: 185px; height: 62px; margin-top: -4px; padding-left: 16px; }
.play { display: flex; align-items: center; justify-content: center; width: 62px; height: 62px; border-radius: 50%; padding-left: 4px; background: #183d4e; box-shadow: 0 1px 3px rgba(0, 0, 0, .4); }
.epoch { width: 165px; }
.epoch output { display: block; margin-top: 2px; font-size: 26px; line-height: 34px; font-weight: 400; }
.field select {
  appearance: none; width: 100%; height: 33px; margin-top: 8px; padding: 0 3px; border: 0; border-bottom: 1px solid #c0c0c0; border-radius: 0;
  background: linear-gradient(to bottom right, #999 50%, transparent 50%) calc(100% - 5px) 15px / 5px 5px no-repeat, linear-gradient(to bottom left, #999 50%, transparent 50%) calc(100% - 10px) 15px / 5px 5px no-repeat;
  font: 16px "Liberation Sans", sans-serif; color: #333;
}
.f-rate { width: 131px; }
.f-act { width: 154px; }
.f-reg { width: 121px; }
.f-regrate { width: 126px; }

/* Playground panel */
.panel { display: grid; grid-template-columns: 141px 594px 302px; padding: 55px 8px 34px 10px; border-top: 1px solid #ddd; border-bottom: 1px solid #e6e6e6; background: #f7f7f7; font-size: 15px; color: #666; box-shadow: 0 40px 0 #f7f7f7; }
.panel h3 { font-size: 18px; line-height: 26px; font-weight: 300; color: #111; }
.data { width: 106px; }
.data label { display: block; margin-bottom: 21px; line-height: 23px; white-space: nowrap; }
.data h3 { margin-bottom: 8px; }
.data input {
  display: block; appearance: none; width: 103px; height: 20px; margin: 0;
  background: linear-gradient(90deg, #183d4e 11%, #4557a5 11% var(--from), #183d4e var(--from) var(--to), #888 var(--to) 89%, #bbb 89%) center / 100% 2px no-repeat;
}
.data input::-webkit-slider-thumb { appearance: none; width: 12px; height: 12px; }
.regen { display: block; width: 104px; height: 38px; margin-top: 26px; border-radius: 3px; background: #eee; font-size: 14px; }

.network { display: grid; grid-template-columns: 141px 415px; grid-template-rows: 118px auto; align-content: start; }
.features p { width: 96px; margin-top: 8px; line-height: 20px; word-break: break-all; }
.round { width: 30px; height: 30px; border-radius: 50%; background: #ededed; font: 24px/30px "Liberation Sans", sans-serif; color: #333; }
.layers-head { display: flex; align-items: center; height: 24px; padding-left: 70px; font-size: 18px; color: #111; white-space: nowrap; }
.layers-head .round { margin-right: 11px; }
.count { margin: 0 12px 0 6px; font-size: 18px; }
.bracket { height: 5px; margin-top: 19px; border: 1px solid #bbb; border-bottom: 0; }
.layer-controls { display: flex; gap: 94px; margin-top: 13px; padding-left: 35px; }
.layer-controls div { flex: none; display: grid; grid-template-columns: 30px 30px; gap: 6px; width: 66px; }
.layer-controls span { grid-column: 1 / 3; text-align: center; font-size: 13px; line-height: 20px; color: #222; }
.canvas { grid-column: 1 / 3; position: relative; }
.graph { overflow: visible; }
.nodes path { fill: #63a8d6; }
.nodes .bg { fill: #f0f0f1; }
.nodes .frame { stroke: #000; stroke-width: 2; filter: url(#drop); }
.nodes .bg ~ .frame { fill: none; }
.nodes .pale { fill: #cfdfea; }
.nodes .paler { fill: #7db5db; }
.inputs text { font-size: 15px; fill: #222; }
.inputs text .sub { font-size: 11px; }
.callout { position: absolute; font-size: 13px; line-height: 17px; font-style: italic; white-space: nowrap; }
.neuron-note { left: 205px; top: 193px; }
.weight-note { left: 315px; top: 178px; }

.loss { display: flex; justify-content: space-between; height: 78px; margin-top: 8px; line-height: 22px; white-space: nowrap; }
.loss svg { margin-top: 3px; }
.test-loss { color: #111; }
.plot { overflow: visible; }
.plot text, .legend text { font-size: 10px; fill: #aaa; text-anchor: middle; }
.plot .axis-y text { text-anchor: end; }
.plot .zero { fill: #333; stroke: #333; stroke-width: .3; }
.dots-orange, .dots-blue { fill: none; }
.dots-orange { marker: url(#orange); }
.dots-blue { marker: url(#blue); }
.legend { display: flex; gap: 15px; margin-top: 40px; line-height: 20px; }
.legend p { width: 115px; white-space: nowrap; }
.legend svg { margin-top: 1px; overflow: visible; }
.legend text { fill: #666; }
.checks { display: flex; margin-top: 22px; line-height: 24px; }
.checks label { display: flex; width: 145px; }
.checks input { appearance: none; flex: none; width: 17px; height: 18px; margin: 4px 10px 0 0; border: 2px solid #757575; border-radius: 2px; }
.checks span { width: 112px; word-break: break-all; }
```
